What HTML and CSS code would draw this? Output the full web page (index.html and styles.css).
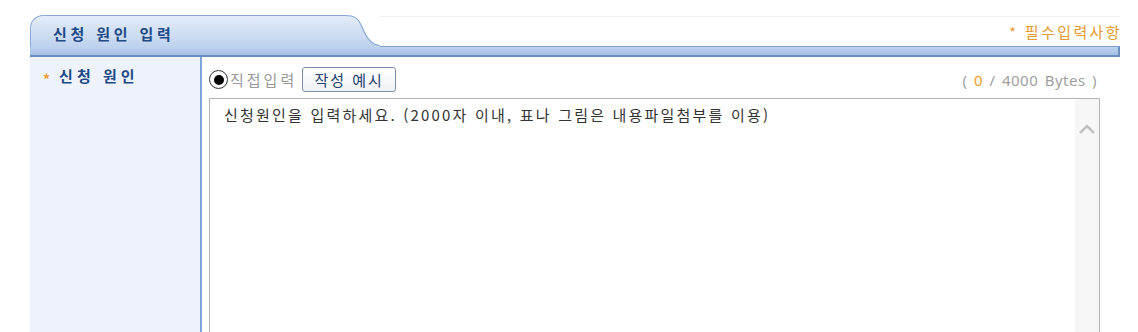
FILE: index.html
```html
<!DOCTYPE html>
<html lang="ko">
<head>
<meta charset="utf-8">
<title>신청 원인 입력</title>
<link rel="stylesheet" href="styles.css">
</head>
<body>
<div class="wrap">
  <div class="header">
    <div class="tab"><span class="tab-title">신청 원인 입력</span></div>
    <svg class="curve" width="35" height="47" viewBox="0 0 35 47">
      <defs>
        <linearGradient id="tg" x1="0" y1="15" x2="0" y2="47" gradientUnits="userSpaceOnUse">
          <stop offset="0" stop-color="#e4edf9"/>
          <stop offset="1" stop-color="#bed2ee"/>
        </linearGradient>
      </defs>
      <path d="M0 15.5 C10 15.5 13 18 17 27 C21 37 26 45.5 35 45.5 L35 47 L0 47 Z" fill="url(#tg)"/>
      <path d="M0 15.5 C10 15.5 13 18 17 27 C21 37 26 45.5 35 45.5" fill="none" stroke="#88a9d6" stroke-width="1.2"/>
    </svg>
    <div class="right">
      <span class="req"><span class="star">*</span> 필수입력사항</span>
    </div>
  </div>
  <div class="bar"></div>
  <div class="body">
    <div class="label"><span class="lstar">*</span><span class="ltext">신청 원인</span></div>
    <div class="content">
      <div class="toolbar">
        <span class="radio"><span class="dot"></span></span>
        <span class="radio-label">직접입력</span>
        <button class="btn" type="button">작성 예시</button>
        <span class="bytes">( <span class="zero">0</span> / 4000 Bytes )</span>
      </div>
      <div class="textbox">
        <div class="text">신청원인을 입력하세요. (2000자 이내, 표나 그림은 내용파일첨부를 이용)</div>
        <div class="scroll">
          <svg width="18" height="12" viewBox="0 0 18 12"><path d="M2 10 L9 3 L16 10" fill="none" stroke="#c2c2c2" stroke-width="2.6"/></svg>
        </div>
      </div>
    </div>
  </div>
</div>
</body>
</html>
```

FILE: styles.css
```css
html, body {
  margin: 0;
  padding: 0;
  background: #fff;
}
body {
  font-family: "Noto Sans CJK KR", "Noto Sans", sans-serif;
  overflow: hidden;
  height: 332px;
}
.wrap {
  margin-left: 30px;
  width: 1090px;
}
.header {
  display: flex;
  height: 47px;
}
.tab {
  box-sizing: border-box;
  width: 315px;
  height: 32px;
  margin-top: 15px;
  border-top: 1px solid #88a9d6;
  border-left: 1px solid #88a9d6;
  border-radius: 13px 0 0 0;
  background: linear-gradient(#e4edf9, #bed2ee);
  padding-left: 22px;
  display: flex;
  align-items: center;
}
.tab-title {
  font-size: 15px;
  font-weight: bold;
  color: #1f4a86;
  letter-spacing: 3.8px;
  line-height: 1;
  margin-top: 3px;
}
.curve {
  display: block;
  flex: none;
}
.right {
  flex: 1;
  box-sizing: border-box;
  margin-top: 16px;
  height: 31px;
  border-top: 1px solid #eeeeee;
  border-bottom: 1px solid #7f9fcd;
  display: flex;
  justify-content: flex-end;
  align-items: flex-start;
}
.req {
  font-size: 15px;
  color: #e49a2c;
  letter-spacing: 2.4px;
  line-height: 1;
  margin-top: 7px;
  margin-right: -2px;
}
.req .star {
  font-size: 14px;
}
.bar {
  box-sizing: border-box;
  height: 10px;
  background: linear-gradient(#bed2ee, #a3bfe4);
  border-bottom: 2px solid #6c8dbf;
  border-right: 2px solid #6c8dbf;
}
.body {
  display: flex;
  height: 275px;
}
.label {
  box-sizing: border-box;
  width: 172px;
  background: #eef3fb;
  border-right: 2px solid #7ea5dc;
  padding: 10px 0 0 13px;
  display: flex;
  align-items: flex-start;
  gap: 9px;
}
.lstar {
  color: #f0a030;
  font-size: 14px;
  font-weight: bold;
  line-height: 14px;
  margin-top: 5px;
}
.ltext {
  font-size: 15px;
  font-weight: bold;
  color: #1f4a86;
  letter-spacing: 4px;
  line-height: 18px;
}
.content {
  flex: 1;
  padding: 10px 0 0 7px;
}
.toolbar {
  display: flex;
  align-items: center;
  width: 890px;
  height: 25px;
}
.radio {
  box-sizing: border-box;
  width: 19px;
  height: 19px;
  border: 1.5px solid #333;
  border-radius: 50%;
  display: flex;
  align-items: center;
  justify-content: center;
  background: #fff;
}
.dot {
  width: 10px;
  height: 10px;
  border-radius: 50%;
  background: #000;
}
.radio-label {
  margin-left: 2px;
  font-size: 15px;
  color: #9a9a9a;
  letter-spacing: 3px;
}
.btn {
  margin-left: 5px;
  box-sizing: border-box;
  width: 94px;
  height: 25px;
  border: 1px solid #7d8ca6;
  border-radius: 3px;
  background: linear-gradient(#ffffff, #eef1f6);
  font-family: "Noto Sans CJK KR", sans-serif;
  font-size: 15px;
  color: #23406e;
  letter-spacing: 2px;
  padding: 0;
  line-height: 1;
}
.bytes {
  margin-left: auto;
  margin-right: 2px;
  font-family: "Noto Sans", "Noto Sans CJK KR", sans-serif;
  font-size: 15px;
  color: #a0a0a0;
  letter-spacing: 0.5px;
  word-spacing: 2px;
}
.zero {
  color: #f0a030;
}
.textbox {
  box-sizing: border-box;
  margin-top: 6px;
  width: 891px;
  height: 240px;
  border: 1px solid #b4b4b4;
  display: flex;
}
.text {
  flex: 1;
  padding: 7px 0 0 14px;
  font-size: 15px;
  color: #333;
  letter-spacing: 2.2px;
  line-height: 18px;
}
.scroll {
  width: 24px;
  background: #f7f7f7;
  display: flex;
  justify-content: center;
  align-items: flex-start;
  padding-top: 24px;
}
.scroll svg {
  display: block;
}
```
